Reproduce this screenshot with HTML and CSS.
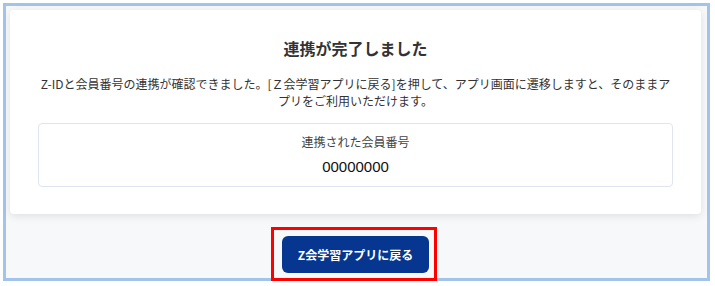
FILE: index.html
```html
<!DOCTYPE html>
<html lang="ja">
<head>
  <meta charset="UTF-8">
  <meta name="viewport" content="width=device-width, initial-scale=1.0">
  <title>連携完了</title>
  <link rel="stylesheet" href="styles.css">
</head>
<body>
  <div class="frame">
    <div class="card">
      <h1 class="title">連携が完了しました</h1>
      <p class="message">Z-IDと会員番号の連携が確認できました。[Ｚ会学習アプリに戻る]を押して、アプリ画面に遷移しますと、そのままアプリをご利用いただけます。</p>
      <div class="member-box">
        <div class="member-label">連携された会員番号</div>
        <div class="member-number">00000000</div>
      </div>
    </div>

    <div class="actions">
      <button class="back-btn">Z会学習アプリに戻る<span class="highlight"></span></button>
    </div>
  </div>
</body>
</html>
```

FILE: styles.css
```css
* {
  margin: 0;
  padding: 0;
  box-sizing: border-box;
}

body {
  width: 715px;
  height: 286px;
  background: #fff;
  font-family: "Noto Sans CJK JP", "Noto Sans", sans-serif;
  color: #333;
}

.frame {
  margin: 3px 0 0 3px;
  width: 707px;
  height: 278px;
  border: 3px solid #a3c4ea;
  background: #f7f8fa;
  padding: 4px 6px 0 4px;
}

.card {
  background: #fff;
  border-radius: 4px;
  box-shadow: 0 2px 8px rgba(0, 0, 0, 0.1);
  padding: 26px 28px 27px 28px;
  text-align: center;
}

.title {
  font-size: 16px;
  font-weight: 700;
  line-height: 24px;
  color: #333;
  margin-bottom: 15px;
}

.message {
  font-size: 12px;
  line-height: 17px;
  color: #333;
}

.member-box {
  margin-top: 14px;
  border: 1px solid #dfe5ee;
  border-radius: 4px;
  padding: 9px 0 9px;
}

.member-label {
  font-size: 12px;
  line-height: 18px;
  color: #444;
}

.member-number {
  margin-top: 6px;
  font-family: "Liberation Sans", Arial, sans-serif;
  font-size: 15px;
  line-height: 20px;
  color: #111;
}

.actions {
  display: flex;
  justify-content: center;
  padding-top: 22px;
}

.back-btn {
  position: relative;
  width: 147px;
  height: 37px;
  background: #06368f;
  color: #fff;
  border: none;
  border-radius: 6px;
  font-family: "Noto Sans CJK JP", "Noto Sans", sans-serif;
  font-size: 12px;
  font-weight: 700;
  cursor: pointer;
}

/* annotation frame drawn over the button */
.highlight {
  position: absolute;
  top: -9px;
  left: -11px;
  right: -8px;
  bottom: -8px;
  border: 3px solid #f00;
  pointer-events: none;
}
```
